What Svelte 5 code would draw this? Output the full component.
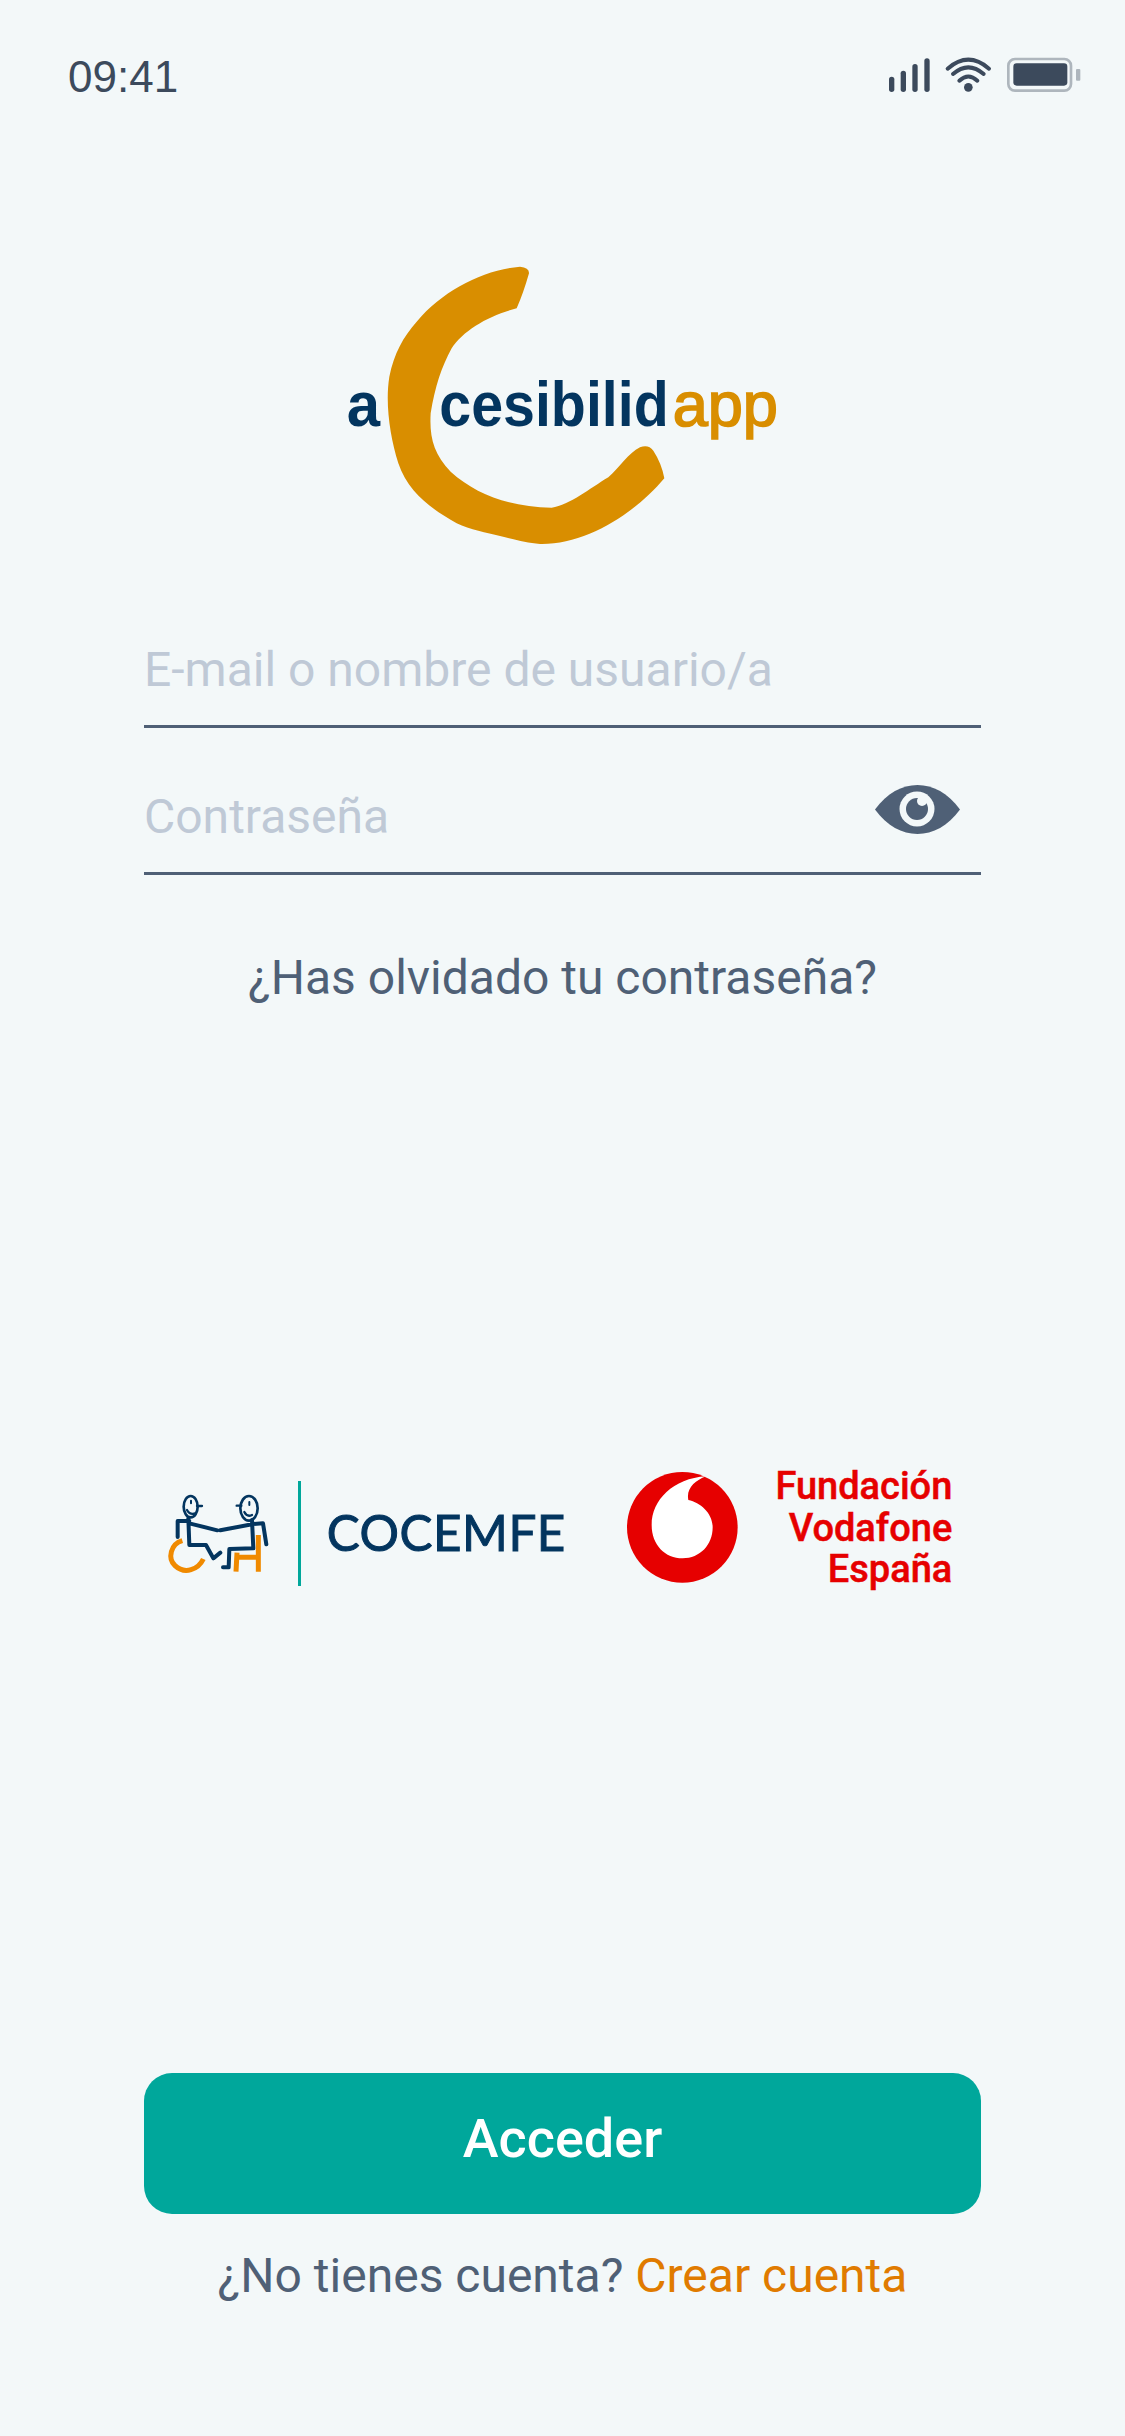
<script>
  let email = 'E-mail o nombre de usuario/a';
  let password = 'Contraseña';
</script>

<main class="page">
  <header class="status">
    <span class="time">09:41</span>
    <svg class="status-icons" width="240" height="70" viewBox="0 0 720 210">
      <g fill="#3c4a5c">
        <rect x="87" y="110" width="16" height="46" rx="8" />
        <rect x="122" y="92" width="16" height="64" rx="8" />
        <rect x="157" y="72" width="16" height="84" rx="8" />
        <rect x="193" y="55" width="16" height="101" rx="8" />
        <circle cx="325" cy="142" r="13" />
      </g>
      <g fill="none" stroke="#3c4a5c" stroke-width="12" stroke-linecap="round">
        <path d="M298 122 Q325 97 352 122" />
        <path d="M279 102 Q325 62 371 102" />
        <path d="M263 86 Q325 32 387 86" />
      </g>
      <rect x="445" y="57" width="188" height="95" rx="20" fill="none" stroke="#aeb6bd" stroke-width="8" />
      <rect x="460" y="70" width="162" height="67" rx="10" fill="#3c4a5c" />
      <rect x="648" y="87" width="13" height="35" rx="3" fill="#aeb6bd" />
    </svg>
  </header>

  <div class="logo">
    <svg width="480" height="320" viewBox="0 0 1440 960">
      <path
        fill="#d98e00"
        d="M600 80 Q628 82 627 100 Q610 160 590 205 C510 225 430 270 395 325 C365 380 345 440 332 520 C328 590 340 640 392 695 C470 765 570 800 695 803 C750 795 810 745 865 712 C900 680 925 640 960 622 Q985 612 1000 632 Q1025 670 1033 715 C950 815 800 915 660 912 C620 908 590 900 540 888 C500 878 450 870 410 850 C340 810 265 760 235 670 C210 590 195 490 208 410 C222 340 250 290 290 245 C370 150 490 90 600 80 Z"
      />
      <text class="wordmark navy" x="80" y="557" textLength="100" lengthAdjust="spacingAndGlyphs">a</text>
      <text class="wordmark navy" x="358" y="557" textLength="688" lengthAdjust="spacingAndGlyphs">cesibilid</text>
      <text class="wordmark amber" x="1058" y="557" textLength="316" lengthAdjust="spacingAndGlyphs">app</text>
    </svg>
  </div>

  <form class="form" on:submit|preventDefault>
    <label class="field">
      <span class="placeholder">{email}</span>
    </label>
    <label class="field second">
      <span class="placeholder">{password}</span>
      <svg class="eye" width="85" height="49" viewBox="0 0 85 49">
        <path fill="#4f6076" d="M0 24.5 C12 8 27 0 42.5 0 C58 0 73 8 85 24.5 C73 41 58 49 42.5 49 C27 49 12 41 0 24.5 Z" />
        <circle cx="42" cy="24" r="17.5" fill="#f3f8f9" />
        <circle cx="42" cy="24" r="11" fill="#4f6076" />
        <circle cx="47" cy="16" r="5" fill="#f3f8f9" />
      </svg>
    </label>
    <p class="forgot">¿Has olvidado tu contraseña?</p>
  </form>

  <section class="partners">
    <svg width="440" height="160" viewBox="0 0 1320 480">
      <g fill="none" stroke="#f08a00" stroke-linecap="butt">
        <path stroke-width="15" d="M97 272 C62 282 52 325 75 347 C105 375 145 358 160 327" />
        <path stroke-width="15" d="M325 255 L325 365 M260 322 L325 322 M261 308 L258 365" />
      </g>
      <g fill="none" stroke="#03355f" stroke-width="12" stroke-linecap="round" stroke-linejoin="round">
        <ellipse cx="122" cy="170" rx="21" ry="32" stroke-width="8" />
        <ellipse cx="297" cy="175" rx="26" ry="37" stroke-width="8" />
        <path stroke-width="7" d="M141 168 L156 168 M111 180 Q120 196 136 190 M260 167 L274 167 M283 186 Q291 202 306 195" />
        <path stroke-width="6" d="M123 152 L123 160 M298 156 L298 165" />
        <path d="M83 261 L83 213 L118 213 M115 205 L118 285 L168 285 L190 325 L211 308 M118 220 L202 241" />
        <path d="M211 241 L310 222 L339 220 L349 283 M306 210 L310 295 L238 297 L236 352 L219 352" />
      </g>
      <rect x="444" y="93" width="9" height="315" fill="#00a79b" />
      <text class="cocemfe" x="530" y="302" textLength="716">COCEMFE</text>
    </svg>
    <svg width="370" height="160" viewBox="0 0 1110 480">
      <circle cx="217" cy="232" r="166" fill="#e60000" />
      <path
        fill="#fff"
        d="M288 79 C190 85 125 150 125 225 C125 285 165 325 218 325 C270 325 308 285 308 232 C308 190 272 158 235 150 C228 115 255 92 288 79 Z"
      />
      <g class="vf">
        <text x="1027" y="148">Fundación</text>
        <text x="1027" y="272">Vodafone</text>
        <text x="1027" y="395">España</text>
      </g>
    </svg>
  </section>

  <footer class="footer">
    <button class="submit" type="button">Acceder</button>
    <p class="signup">¿No tienes cuenta? <a href="#crear">Crear cuenta</a></p>
  </footer>
</main>

<style>
  :global(body) {
    margin: 0;
    background: #f3f8f9;
  }

  .page {
    width: 1125px;
    min-height: 2436px;
    background: #f3f8f9;
    font-family: Roboto, sans-serif;
    box-sizing: border-box;
  }

  .status {
    display: flex;
    justify-content: space-between;
    align-items: flex-start;
    padding: 40px 25px 0 68px;
    height: 110px;
    box-sizing: border-box;
  }

  .time {
    margin-top: 12px;
    font-family: 'Liberation Sans', sans-serif;
    font-size: 44px;
    line-height: 50px;
    color: #3c4a5c;
  }

  .logo {
    margin-top: 130px;
    padding-left: 320px;
    height: 320px;
  }

  .logo svg {
    display: block;
  }

  .wordmark {
    font-family: 'Liberation Sans', sans-serif;
    font-size: 188px;
  }

  .navy {
    fill: #03355f;
    font-weight: 700;
  }

  .amber {
    fill: #d98e00;
    font-weight: 400;
    stroke: #d98e00;
    stroke-width: 5px;
  }

  .form {
    padding: 50px 144px 0;
  }

  .field {
    display: flex;
    justify-content: space-between;
    align-items: flex-start;
    padding: 30px 0 25px;
    border-bottom: 3px solid #4f6076;
  }

  .second {
    margin-top: 29px;
  }

  .placeholder {
    font-size: 48px;
    line-height: 60px;
    color: #bfc9d6;
  }

  .eye {
    margin: -2px 21px 0 0;
  }

  .forgot {
    margin: 73px 0 0;
    text-align: center;
    font-size: 48px;
    line-height: 60px;
    color: #4f6076;
  }

  .partners {
    display: flex;
    gap: 20px;
    margin-top: 442px;
    padding-left: 150px;
    height: 160px;
  }

  .cocemfe {
    font-family: Lato, sans-serif;
    font-size: 148px;
    font-weight: 400;
    fill: #03355f;
    stroke: #03355f;
    stroke-width: 3px;
  }

  .vf {
    font-family: Roboto, sans-serif;
    font-size: 114px;
    font-weight: 500;
    fill: #e60000;
    stroke: #e60000;
    stroke-width: 1.5px;
    text-anchor: end;
  }

  .footer {
    margin-top: 463px;
    padding: 0 144px;
  }

  .submit {
    display: block;
    width: 100%;
    height: 141px;
    padding: 0 0 10px;
    border: 0;
    border-radius: 28px;
    background: #00a79b;
    color: #fff;
    font-family: Roboto, sans-serif;
    font-size: 54px;
    font-weight: 500;
  }

  .signup {
    margin: 32px 0 0;
    text-align: center;
    font-size: 48px;
    line-height: 60px;
    color: #4f6076;
  }

  .signup a {
    color: #e07b00;
    text-decoration: none;
  }
</style>
